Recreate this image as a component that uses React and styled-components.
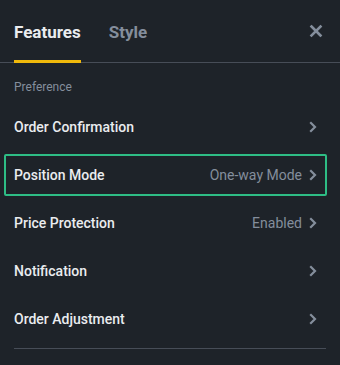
import styled, { createGlobalStyle } from "styled-components";

const GlobalStyle = createGlobalStyle`
  html, body {
    margin: 0;
    padding: 0;
    background: #1e2329;
  }
  body {
    font-family: Roboto, "Liberation Sans", sans-serif;
    -webkit-font-smoothing: antialiased;
  }
`;

const rows = [
  { label: "Order Confirmation" },
  { label: "Position Mode", value: "One-way Mode", active: true },
  { label: "Price Protection", value: "Enabled" },
  { label: "Notification" },
  { label: "Order Adjustment" },
];

const Chevron = () => (
  <svg width="10" height="12" viewBox="0 0 10 12" fill="none">
    <path
      d="M3 2L7 6L3 10"
      stroke="#848e9c"
      strokeWidth="2.2"
      strokeLinecap="square"
      strokeLinejoin="miter"
    />
  </svg>
);

const CloseIcon = () => (
  <svg width="14" height="14" viewBox="0 0 14 14" fill="none">
    <path
      d="M2.5 2.5L11.5 11.5M11.5 2.5L2.5 11.5"
      stroke="#848e9c"
      strokeWidth="2.6"
      strokeLinecap="square"
    />
  </svg>
);

const App = () => {
  return (
    <>
      <GlobalStyle />
      <StPanel>
        <StHeader>
          <StTab $active>Features</StTab>
          <StTab>Style</StTab>
          <StClose>
            <CloseIcon />
          </StClose>
        </StHeader>

        <StSection>Preference</StSection>

        <StList>
          {rows.map((row) => (
            <StRow key={row.label} $active={row.active}>
              <span>{row.label}</span>
              <StRight>
                {row.value && <StValue>{row.value}</StValue>}
                <Chevron />
              </StRight>
            </StRow>
          ))}
        </StList>

        <StDivider />
      </StPanel>
    </>
  );
};

export default App;

const StPanel = styled.div`
  width: 340px;
  height: 365px;
  background: #1e2329;
  overflow: hidden;
`;

const StHeader = styled.div`
  display: flex;
  align-items: stretch;
  height: 62px;
  padding: 0 14px;
  gap: 28px;
  border-bottom: 1px solid #474d57;
`;

const StTab = styled.div`
  position: relative;
  display: flex;
  align-items: center;
  padding-top: 1px;
  font-size: 17px;
  font-weight: 700;
  color: ${(p) => (p.$active ? "#eaecef" : "#848e9c")};

  &::after {
    content: "";
    position: absolute;
    left: 0;
    right: 0;
    bottom: -1px;
    height: 3px;
    background: ${(p) => (p.$active ? "#f0b90b" : "transparent")};
  }
`;

const StClose = styled.div`
  margin-left: auto;
  display: flex;
  align-items: center;
  padding-right: 3px;
`;

const StSection = styled.div`
  padding: 16px 14px 0;
  height: 16px;
  line-height: 16px;
  font-size: 12px;
  color: #848e9c;
`;

const StList = styled.div`
  margin-top: 8px;
  display: flex;
  flex-direction: column;
`;

const StRow = styled.div`
  display: flex;
  align-items: center;
  justify-content: space-between;
  height: 42px;
  box-sizing: border-box;
  margin: 3px 13px 3px 4px;
  padding: 0 7px 0 8px;
  border: 2px solid ${(p) => (p.$active ? "#2ebd85" : "transparent")};
  border-radius: 2px;
  font-size: 14px;
  font-weight: 500;
  color: #eaecef;
`;

const StRight = styled.div`
  display: flex;
  align-items: center;
  gap: 6px;
`;

const StValue = styled.span`
  font-weight: 400;
  color: #848e9c;
`;

const StDivider = styled.div`
  margin: 5px 14px 0;
  height: 1px;
  background: #474d57;
`;
